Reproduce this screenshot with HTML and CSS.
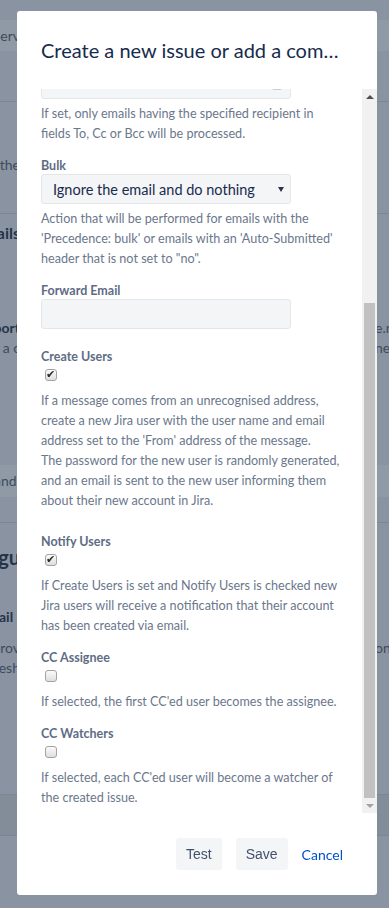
FILE: index.html
```html
<!DOCTYPE html>
<html lang="en">
<head>
    <meta charset="UTF-8">
    <meta name="viewport" content="width=device-width, initial-scale=1.0">
    <title>Incoming Mail - Handler</title>
    <link rel="stylesheet" href="styles.css">
</head>
<body>
    <!-- page behind the dialog -->
    <div class="page">
        <div class="bg-top"></div>
        <div class="bg-band">
            <div class="bg-line bg-line--band"><span class="frag-l">Incoming Mail Serv</span><span class="frag-r"></span></div>
        </div>
        <div class="bg-section bg-section--nav"></div>
        <div class="bg-section bg-section--intro">
            <div class="bg-line"><span class="frag-l">servers from the</span><span class="frag-r"></span></div>
        </div>
        <div class="bg-section bg-section--servers">
            <div class="bg-line bg-line--heading"><span class="frag-l">Mail Servers Details</span><span class="frag-r"></span></div>
            <div class="bg-line bg-line--gap75"><span class="frag-l frag-bold">Support</span><span class="frag-r">e.net</span></div>
            <div class="bg-line"><span class="frag-l">Creates a c</span><span class="frag-r">ne</span></div>
            <div class="bg-band bg-band--handler">
                <div class="bg-line bg-line--band2"><span class="frag-l">Add handl</span><span class="frag-r"></span></div>
            </div>
        </div>
        <div class="bg-section bg-section--config">
            <div class="bg-line bg-line--title"><span class="frag-l frag-big">Configu</span><span class="frag-r"></span></div>
            <div class="bg-line bg-line--gap38"><span class="frag-l frag-bold">Mail l</span><span class="frag-r"></span></div>
            <div class="bg-line bg-line--gap11"><span class="frag-l">Improv</span><span class="frag-r">on</span></div>
            <div class="bg-line"><span class="frag-l">refresh</span><span class="frag-r"></span></div>
        </div>
        <div class="bg-footer"></div>
    </div>

    <div class="dialog">
        <h2 class="dialog-title">Create a new issue or add a comment to an existing issue</h2>

        <div class="dialog-main">
            <div class="dialog-body" id="dialogBody">
                <form class="form">
                    <div class="field">
                        <label>Project</label>
                        <div class="select-wrap">
                            <select class="select"><option>Support Desk</option></select>
                        </div>
                        <div class="description">Default project where new issues are created.</div>
                    </div>

                    <div class="field">
                        <label>Issue Type</label>
                        <div class="select-wrap">
                            <select class="select"><option>Task</option></select>
                        </div>
                        <div class="description">Default type for new issues.</div>
                    </div>

                    <div class="field">
                        <label>Strip Quotes</label>
                        <input type="checkbox" class="checkbox">
                        <div class="description description--check">If checked quoted text is removed from comments.</div>
                    </div>

                    <div class="field">
                        <label>Catch Email Address</label>
                        <div class="input-wrap">
                            <input type="text" class="text">
                            <span class="input-icon"></span>
                        </div>
                        <div class="description">If set, only emails having the specified recipient in fields To, Cc or Bcc will be processed.</div>
                    </div>

                    <div class="field">
                        <label>Bulk</label>
                        <div class="select-wrap">
                            <select class="select"><option>Ignore the email and do nothing</option></select>
                        </div>
                        <div class="description">Action that will be performed for emails with the 'Precedence: bulk' or emails with an 'Auto-Submitted' header that is not set to "no".</div>
                    </div>

                    <div class="field">
                        <label>Forward Email</label>
                        <input type="text" class="text">
                    </div>

                    <div class="field field--after-input">
                        <label>Create Users</label>
                        <input type="checkbox" class="checkbox" checked>
                        <div class="description description--check">If a message comes from an unrecognised address, create a new Jira user with the user name and email address set to the 'From' address of the message.<br>The password for the new user is randomly generated, and an email is sent to the new user informing them about their new account in Jira.</div>
                    </div>

                    <div class="field field--spaced">
                        <label>Notify Users</label>
                        <input type="checkbox" class="checkbox" checked>
                        <div class="description description--check">If Create Users is set and Notify Users is checked new Jira users will receive a notification that their account has been created via email.</div>
                    </div>

                    <div class="field">
                        <label>CC Assignee</label>
                        <input type="checkbox" class="checkbox">
                        <div class="description description--check">If selected, the first CC'ed user becomes the assignee.</div>
                    </div>

                    <div class="field">
                        <label>CC Watchers</label>
                        <input type="checkbox" class="checkbox">
                        <div class="description description--check">If selected, each CC'ed user will become a watcher of the created issue.</div>
                    </div>
                </form>
            </div>

            <div class="scrollbar">
                <span class="scroll-arrow scroll-arrow--up"></span>
                <div class="scroll-track"><div class="scroll-thumb" id="scrollThumb"></div></div>
                <span class="scroll-arrow scroll-arrow--down"></span>
            </div>
        </div>

        <div class="dialog-footer">
            <button class="btn" type="button">Test</button>
            <button class="btn" type="button">Save</button>
            <a class="btn-link" href="#">Cancel</a>
        </div>
    </div>

    <script>
        // dialog opens scrolled down to the last options
        const body = document.getElementById('dialogBody');
        const thumb = document.getElementById('scrollThumb');

        function updateThumb() {
            const track = thumb.parentElement.clientHeight;
            const ratio = body.clientHeight / body.scrollHeight;
            const size = Math.max(Math.round(track * ratio), 20);
            const maxScroll = body.scrollHeight - body.clientHeight;
            const offset = maxScroll ? Math.round((track - size) * body.scrollTop / maxScroll) : 0;
            thumb.style.height = size + 'px';
            thumb.style.marginTop = offset + 'px';
        }

        body.scrollTop = body.scrollHeight;
        updateThumb();
    </script>
</body>
</html>
```

FILE: styles.css
```css
* {
    margin: 0;
    padding: 0;
    box-sizing: border-box;
}

body {
    font-family: Lato, 'Noto Sans', sans-serif;
    background: #8993a1;
    height: 908px;
    overflow: hidden;
}

/* ---------- page behind the blanket ---------- */

.page {
    display: flex;
    flex-direction: column;
    color: #3e4b5c;
    font-size: 14px;
}

.bg-top {
    height: 20px;
}

.bg-band {
    background: #909aa7;
}

.bg-section {
    border-bottom: 1px solid #7b8593;
}

.bg-section--nav {
    height: 51px;
}

.bg-section--intro {
    height: 112px;
    padding-top: 53px;
}

.bg-section--servers {
    height: 309px;
    padding-top: 9px;
}

.bg-section--config {
    height: 272px;
    padding-top: 22px;
}

.bg-footer {
    height: 41px;
    background: #838d9a;
    border-bottom: 1px solid #7b8593;
}

.bg-band--handler {
    margin-top: 107px;
}

.bg-line {
    display: flex;
    justify-content: space-between;
    height: 20px;
    line-height: 20px;
    white-space: nowrap;
}

.bg-line--band {
    height: 31px;
    line-height: 31px;
}

.bg-line--band2 {
    height: 32px;
    line-height: 32px;
}

.bg-line--heading {
    font-size: 16px;
    font-weight: bold;
    color: #26344a;
}

.bg-line--gap75 {
    margin-top: 75px;
}

.bg-line--title {
    height: 24px;
    line-height: 24px;
}

.bg-line--gap38 {
    margin-top: 38px;
}

.bg-line--gap11 {
    margin-top: 11px;
}

.frag-l {
    width: 20px;
    overflow: hidden;
    display: flex;
    justify-content: flex-end;
}

.frag-r {
    width: 14px;
    overflow: hidden;
}

.frag-bold {
    font-weight: bold;
    color: #26344a;
}

.frag-big {
    font-size: 20px;
    font-weight: bold;
    color: #26344a;
}

/* ---------- dialog ---------- */

.dialog {
    position: fixed;
    top: 11px;
    left: 17px;
    width: 360px;
    height: 884px;
    background: #fff;
    border-radius: 3px;
    display: flex;
    flex-direction: column;
}

.dialog-title {
    padding: 27px 24px;
    font-size: 20px;
    line-height: 24px;
    font-weight: normal;
    color: #172b4d;
    white-space: nowrap;
    overflow: hidden;
    text-overflow: ellipsis;
}

.dialog-main {
    flex: 1;
    min-height: 0;
    display: flex;
}

.dialog-body {
    flex: 1;
    overflow: hidden;
    padding: 10px 19px 5px 24px;
}

/* classic scrollbar look */
.scrollbar {
    width: 15px;
    background: #f1f1f1;
    display: flex;
    flex-direction: column;
}

.scroll-arrow {
    height: 15px;
    display: flex;
    justify-content: center;
    align-items: center;
}

.scroll-arrow--up::before {
    content: '';
    border-left: 4px solid transparent;
    border-right: 4px solid transparent;
    border-bottom: 4px solid #505050;
}

.scroll-arrow--down::before {
    content: '';
    border-left: 4px solid transparent;
    border-right: 4px solid transparent;
    border-top: 4px solid #a3a3a3;
}

.scroll-track {
    flex: 1;
    padding: 0 2px;
}

.scroll-thumb {
    background: #c1c1c1;
}

/* ---------- form ---------- */

.field + .field {
    margin-top: 14px;
}

.field.field--after-input {
    margin-top: 20px;
}

.field.field--spaced {
    margin-top: 23px;
}

.field label {
    display: block;
    font-size: 12.5px;
    line-height: 16px;
    font-weight: bold;
    color: #5e6c84;
}

.select-wrap,
.input-wrap {
    position: relative;
    width: 250px;
}

.select,
.text {
    display: block;
    width: 250px;
    height: 30px;
    background: #f4f5f7;
    border: 1px solid #e4e6ea;
    border-radius: 3px;
    font-family: inherit;
    color: #172b4d;
    outline: none;
}

.select {
    appearance: none;
    -webkit-appearance: none;
    font-size: 14.5px;
    padding: 0 24px 0 11px;
}

.select-wrap::after {
    content: '';
    position: absolute;
    right: 7px;
    top: 13px;
    border-left: 3px solid transparent;
    border-right: 3px solid transparent;
    border-top: 5px solid #2a3545;
}

.input-icon {
    position: absolute;
    right: 9px;
    top: 10px;
    width: 10px;
    height: 11px;
    border-radius: 2px;
    background: #c9ccd1;
}

.checkbox {
    appearance: none;
    -webkit-appearance: none;
    display: block;
    position: relative;
    width: 12px;
    height: 12px;
    margin: 4px 0 0 4px;
    border: 1px solid #a3a3a3;
    border-radius: 3px;
    background: linear-gradient(#fbfbfb, #dedede);
}

.checkbox:checked::after {
    content: '\2714';
    position: absolute;
    left: 0;
    top: -1px;
    font-family: 'DejaVu Sans', sans-serif;
    font-size: 11px;
    line-height: 12px;
    color: #2b2b2b;
}

.description {
    margin-top: 5px;
    font-size: 12.6px;
    line-height: 20px;
    color: #6b778c;
}

.description--check {
    margin-top: 10px;
}

/* ---------- footer ---------- */

.dialog-footer {
    height: 82px;
    flex-shrink: 0;
    display: flex;
    justify-content: flex-end;
    align-items: center;
    gap: 14px;
    padding: 0 24px;
}

.btn {
    height: 32px;
    padding: 0 10px;
    background: #f4f5f7;
    border: none;
    border-radius: 3px;
    font-family: 'Liberation Sans', Arial, sans-serif;
    font-size: 14px;
    color: #42526e;
    cursor: pointer;
}

.btn-link {
    padding-right: 10px;
    font-size: 14px;
    color: #0052cc;
    text-decoration: none;
}
```
